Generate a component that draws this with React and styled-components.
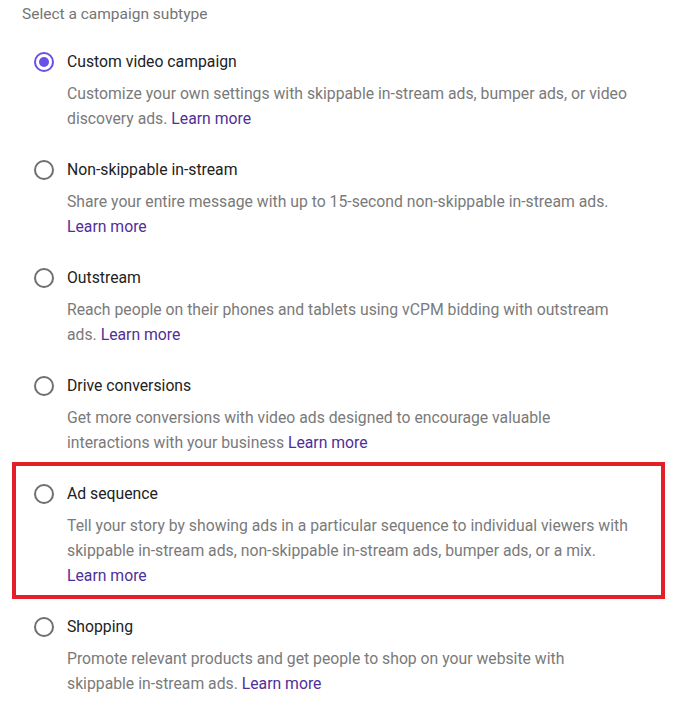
import React from "react";
import styled, { createGlobalStyle } from "styled-components";

const Global = createGlobalStyle`
  html, body { margin: 0; padding: 0; background: #fff; }
  body { font-family: Roboto, "Noto Sans", Arial, sans-serif; -webkit-font-smoothing: antialiased; }
`;

const Page = styled.div`
  width: 680px;
  height: 712px;
  overflow: hidden;
  background: #fff;
  padding-top: 4px;
  box-sizing: border-box;
`;

const Heading = styled.div`
  padding-left: 22px;
  font-size: 15.5px;
  line-height: 20px;
  color: #757575;
  margin-bottom: 26px;
`;

const List = styled.div`
  display: flex;
  flex-direction: column;
  gap: 27px;
`;

const Item = styled.div`
  position: relative;
  display: grid;
  grid-template-columns: 20px 1fr;
  column-gap: 13px;
  padding-left: 34px;
  padding-right: 48px;
  ${(p) =>
    p.$highlight &&
    `
    &::after {
      content: "";
      position: absolute;
      left: 12px;
      right: 15px;
      top: -20px;
      bottom: -11px;
      border: 4px solid #e3202a;
      pointer-events: none;
    }
  `}
`;

const Radio = styled.span`
  width: 20px;
  height: 20px;
  margin-top: 2px;
  box-sizing: border-box;
  border-radius: 50%;
  border: 2px solid ${(p) => (p.$checked ? "#6b4fe6" : "#6f6f6f")};
  display: flex;
  align-items: center;
  justify-content: center;
  &::before {
    content: "";
    width: 10px;
    height: 10px;
    border-radius: 50%;
    background: ${(p) => (p.$checked ? "#6b4fe6" : "transparent")};
  }
`;

const Body = styled.div`
  display: flex;
  flex-direction: column;
`;

const Title = styled.div`
  font-size: 15.75px;
  line-height: 24px;
  color: #222222;
`;

const Desc = styled.div`
  margin-top: 7px;
  font-size: 15.75px;
  line-height: 25px;
  color: #7a7a7a;
`;

const Link = styled.a`
  color: #4f2f98;
  text-decoration: none;
`;

const items = [
  {
    title: "Custom video campaign",
    desc: "Customize your own settings with skippable in-stream ads, bumper ads, or video discovery ads.",
    checked: true,
  },
  {
    title: "Non-skippable in-stream",
    desc: "Share your entire message with up to 15-second non-skippable in-stream ads.",
  },
  {
    title: "Outstream",
    desc: "Reach people on their phones and tablets using vCPM bidding with outstream ads.",
  },
  {
    title: "Drive conversions",
    desc: "Get more conversions with video ads designed to encourage valuable interactions with your business",
  },
  {
    title: "Ad sequence",
    desc: "Tell your story by showing ads in a particular sequence to individual viewers with skippable in-stream ads, non-skippable in-stream ads, bumper ads, or a mix.",
    highlight: true,
  },
  {
    title: "Shopping",
    desc: "Promote relevant products and get people to shop on your website with skippable in-stream ads.",
  },
];

export default function App() {
  return (
    <Page>
      <Global />
      <Heading>Select a campaign subtype</Heading>
      <List>
        {items.map((it) => (
          <Item key={it.title} $highlight={it.highlight}>
            <Radio $checked={it.checked} />
            <Body>
              <Title>{it.title}</Title>
              <Desc>
                {it.desc} <Link href="#">Learn more</Link>
              </Desc>
            </Body>
          </Item>
        ))}
      </List>
    </Page>
  );
}
